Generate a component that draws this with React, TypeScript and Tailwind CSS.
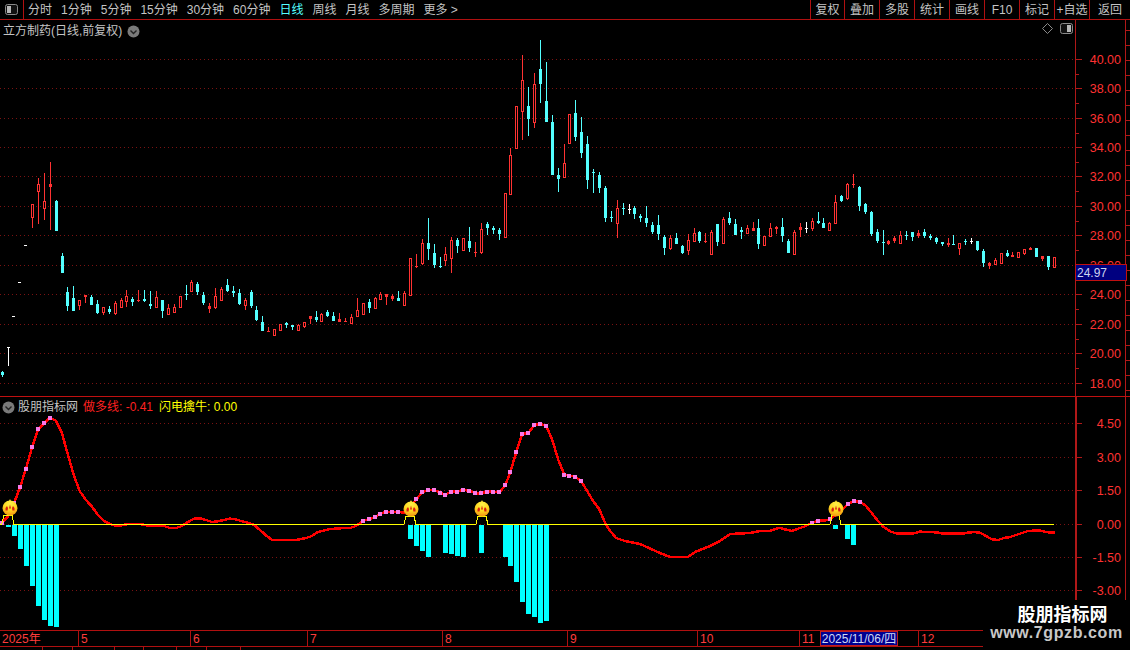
import React from 'react';

type Candle = [number, number, number, number, number, string];

const RED = '#ff3232';
const CYAN = '#54ffff';

// candles were read off zoomed crops, so each block keeps its crop origin
const blockA: Candle[] = [
  [7,662,680,666,676,'c'],[25,592,648,592,593,'w'],[41,499,499,499,500,'w'],[59,397,397,397,398,'w'],[77,286,286,286,287,'w'],
  [97,162,234,162,200,'r'],[115,84,222,102,122,'r'],[133,69,210,153,174,'r'],[151,36,240,102,111,'r'],[169,150,243,153,243,'c'],
  [187,309,369,318,369,'c'],[202,411,483,426,468,'c'],[220,408,483,444,483,'c'],[238,450,480,450,465,'r'],[256,435,459,435,441,'r'],
  [274,435,465,441,465,'c'],[292,450,492,462,489,'c'],[310,471,495,471,486,'r'],[328,468,492,477,486,'c'],[346,453,495,459,489,'r'],
  [364,444,471,450,471,'r'],[379,420,471,438,453,'r'],[397,441,468,447,456,'c'],[415,420,456,450,453,'r'],[433,420,456,447,453,'c'],
  [451,423,477,462,468,'c'],[469,423,471,441,471,'r'],[487,450,504,450,483,'c'],[505,462,492,474,492,'r'],[523,462,489,471,486,'r'],
  [541,438,471,438,471,'r'],[559,405,450,432,435,'c'],[574,390,423,396,423,'r'],[592,396,435,402,426,'c'],[610,426,465,435,459,'c'],
  [628,459,489,468,477,'r'],[646,414,477,438,471,'r'],[664,411,450,417,450,'r'],[682,387,426,405,423,'c'],[700,408,441,423,429,'c'],
  [718,417,465,429,462,'c'],[736,444,480,450,465,'r'],[754,420,474,426,468,'c'],[769,468,513,480,510,'c'],
];

const blockB: Candle[] = [
  [7,408,453,426,453,'c'],[25,441,456,453,456,'r'],[43,447,465,447,465,'r'],[61,432,450,432,450,'r'],[79,426,444,429,435,'c'],
  [97,435,450,435,441,'c'],[115,432,450,435,450,'r'],[133,426,444,426,438,'r'],[151,408,432,408,417,'r'],[169,393,426,411,420,'c'],
  [184,399,426,402,423,'r'],[202,390,411,396,408,'c'],[220,396,423,408,423,'c'],[238,399,426,417,426,'r'],[256,414,426,423,426,'r'],
  [274,402,429,411,429,'r'],[292,354,411,390,408,'r'],[310,369,402,369,402,'r'],[328,357,399,366,384,'c'],[346,351,387,354,384,'r'],
  [361,336,360,342,357,'r'],[379,342,375,342,351,'r'],[397,342,363,348,357,'r'],[415,333,363,354,363,'c'],[433,333,375,339,375,'r'],
  [451,234,345,234,345,'r'],[469,222,264,258,261,'r'],[487,177,255,189,249,'r'],[505,114,240,189,207,'c'],[523,192,264,219,255,'c'],
  [541,231,264,258,261,'c'],[556,201,258,222,240,'r'],[574,171,279,180,234,'r'],[592,174,219,180,198,'c'],[610,174,210,174,210,'r'],
  [628,141,216,183,204,'c'],[646,186,231,216,217,'r'],[664,129,222,147,216,'r'],[682,126,165,132,144,'c'],[700,138,162,144,150,'c'],
  [718,144,180,150,162,'c'],
];

const blockC: Candle[] = [
  [46,489,624,489,621,'r'],[61,354,492,375,492,'r'],[79,228,354,228,354,'r'],[97,75,330,150,243,'r'],[115,171,318,228,267,'c'],
  [133,129,294,162,276,'r'],[151,30,219,117,162,'c'],[169,96,276,213,276,'c'],[187,255,435,276,435,'c'],[205,414,486,435,447,'c'],
  [223,342,441,399,441,'r'],[238,252,342,252,339,'r'],[256,210,333,249,321,'c'],[274,261,384,306,369,'c'],[292,318,477,342,450,'c'],
  [310,417,489,426,429,'c'],[328,426,489,435,474,'c'],[346,468,576,474,564,'c'],[364,543,576,561,564,'c'],[382,510,624,534,579,'r'],
  [400,519,555,534,537,'c'],[418,522,552,537,540,'w'],[433,528,567,534,552,'c'],[451,552,576,558,564,'c'],[469,528,591,564,579,'c'],
  [487,576,612,585,606,'c'],[505,555,630,585,612,'c'],[523,615,675,621,654,'c'],[541,615,660,624,654,'r'],[559,609,642,624,642,'c'],
  [577,645,672,648,669,'c'],[595,612,675,630,660,'r'],[613,594,633,609,633,'r'],[628,603,639,606,633,'c'],[646,609,639,633,636,'r'],
  [664,600,675,606,672,'r'],[682,582,648,582,636,'c'],[700,561,639,567,639,'r'],[718,546,585,564,579,'c'],[736,567,615,582,615,'c'],
  [754,591,627,600,606,'c'],[772,585,609,594,609,'r'],
];

const blockD: Candle[] = [
  [10,186,213,204,213,'r'],[25,177,267,204,252,'c'],[43,228,258,228,255,'r'],[61,189,228,204,228,'r'],[79,198,222,201,207,'r'],
  [97,174,246,201,228,'c'],[115,237,279,243,279,'c'],[133,210,282,216,282,'r'],[151,189,231,201,210,'r'],[169,186,219,204,205,'w'],
  [187,174,213,183,204,'r'],[205,156,192,183,189,'c'],[220,174,204,189,204,'c'],[238,186,210,189,210,'r'],[256,105,192,126,189,'r'],
  [274,105,126,108,123,'c'],[292,69,120,72,114,'r'],[310,42,84,72,75,'r'],[328,78,153,81,138,'c'],[346,129,162,132,156,'c'],
  [364,153,228,156,222,'c'],[382,207,249,216,243,'c'],[400,210,285,246,247,'c'],[415,240,255,243,252,'r'],[433,228,249,234,243,'r'],
  [451,213,249,225,249,'r'],[469,213,240,225,226,'c'],[487,216,243,216,231,'c'],[505,210,234,219,228,'r'],[523,207,234,216,228,'c'],
  [541,222,240,228,234,'c'],[559,231,252,234,246,'c'],[577,246,258,246,252,'c'],[595,234,261,249,255,'r'],[610,225,255,252,253,'c'],
  [628,249,285,249,264,'r'],[646,237,255,243,244,'c'],[664,234,252,243,244,'w'],[682,243,273,243,270,'c'],[700,267,321,273,309,'c'],
  [718,306,327,309,318,'r'],[736,294,315,300,312,'r'],[754,279,309,279,309,'r'],[772,270,291,279,288,'c'],[787,276,291,285,291,'r'],
  [805,276,291,276,291,'r'],[823,267,285,267,279,'r'],[841,261,270,264,270,'r'],[859,264,291,264,291,'c'],[877,288,303,288,297,'r'],
  [895,288,330,288,321,'c'],[913,291,321,291,321,'r'],
];

const place = (list: Candle[], ox: number, oy: number): Candle[] =>
  list.map(([x, hi, lo, top, bot, c]) => [
    Math.floor(ox + x / 3) + 0.5,
    Math.round(oy + hi / 3),
    Math.round(oy + lo / 3),
    Math.round(oy + top / 3),
    Math.round(oy + bot / 3),
    c,
  ]);

const candles = [
  ...place(blockA, 0, 150),
  ...place(blockB, 260, 180),
  ...place(blockC, 490, 30),
  ...place(blockD, 750, 160),
];

const z = (pts: number[][], ox: number, oy: number) => pts.map(([x, y]) => [ox + x / 3, oy + y / 3]);

const lineA = z([[6,398],[24,380],[42,340],[60,292],[78,236],[96,172],[114,118],[132,100],[150,83],[168,92],[186,130],[204,195],[222,258],[240,305],[258,330],[276,350],[294,375],[312,393],[330,402],[348,408],[366,406],[384,402],[402,402],[420,402],[438,406],[456,406],[474,406],[492,408],[510,414],[528,414],[546,408],[564,396],[582,386],[600,385],[618,390],[636,396],[654,394],[672,390],[690,386],[708,388],[726,394],[744,398],[762,405],[780,420],[798,436],[816,450],[834,450],[852,450],[870,450],[888,450],[900,448]], 0, 390);
const lineB = [[306,538],[312,536],[318,532],[330,529],[345,528]];
const lineC = z([[0,354],[18,348],[40,332],[58,328],[76,320],[91,311],[109,306],[127,306],[145,306],[163,308],[181,290],[199,268],[217,246],[235,240],[253,240],[271,248],[286,254],[304,245],[322,245],[340,240],[358,242],[376,250],[394,250],[412,245],[430,245],[448,247],[466,226],[481,186],[499,126],[517,72],[535,69],[553,46],[571,41],[589,49],[607,90],[625,150],[643,194],[658,197],[676,200],[694,214],[712,244],[730,274],[748,298],[766,340],[780,362]], 350, 410);
const lineD = [[616,538],[625,541],[640,544],[660,553],[670,557],[688,557],[695,552],[710,546],[720,541],[730,534],[750,533],[760,531],[770,531],[778,528]];
const lineE = z([[0,114],[18,119],[36,123],[54,116],[72,110],[96,98],[114,92],[132,92],[150,88],[168,74],[186,60],[204,42],[222,33],[240,36],[258,48],[276,70],[294,93],[312,112],[330,124],[348,130],[366,131],[384,131],[402,130],[420,125],[438,126],[456,126],[474,128],[492,131],[510,131],[528,131],[546,131],[564,128],[582,126],[600,128],[618,138],[636,148],[654,150],[672,144],[690,141],[708,135],[726,129],[744,123],[762,122],[780,122],[798,126],[816,128],[825,128]], 780, 490);

const redLine = [...lineA, ...lineB, ...lineC, ...lineD, ...lineE].map(p => p.join(',')).join(' ');

const squares = [
  lineA[0], ...lineA.slice(2, 9),
  ...lineC.slice(2, 9),
  ...lineC.slice(11, 34),
  ...lineC.slice(36, 40),
  lineE[5], lineE[6], lineE[8], lineE[11], lineE[12], lineE[13],
];

const bars = [
  [6,527],[12,536],[18,549],[24,566],[30,586],[36,606],[42,620],[48,626],[54,627],
  [408,539],[414,546],[420,551],[426,557],[443,553],[449,554],[455,556],[461,557],[479,553],
  [503,557],[508,566],[514,582],[520,602],[526,614],[532,617],[538,623],[544,621],
  [833,529],[845,539],[851,545],
];

const yellowLine = '0,524.5 1.7,524.5 4,515 12,515 14,524.5 404,524.5 406,516.5 414,516.5 416,524.5 476,524.5 478,516.5 486,516.5 488,524.5 830,524.5 832,515 839,515 841,524.5 1054,524.5';

const upperTicks = [59, 88, 118, 147, 176, 206, 235, 265, 294, 324, 353, 383];
const upperLabels = ['40.00','38.00','36.00','34.00','32.00','30.00','28.00','26.00','24.00','22.00','20.00','18.00'];
const lowerTicks = [423, 457, 490, 524, 557, 590];
const lowerLabels = ['4.50','3.00','1.50','0.00','-1.50','-3.00'];

const tabs = ['分时','1分钟','5分钟','15分钟','30分钟','60分钟','日线','周线','月线','多周期','更多 >'];
const actions = [
  { label: '复权', w: 'w-[34px]' },
  { label: '叠加', w: 'w-[35px]' },
  { label: '多股', w: 'w-[35px]' },
  { label: '统计', w: 'w-[35px]' },
  { label: '画线', w: 'w-[35px]' },
  { label: 'F10', w: 'w-[35px]' },
  { label: '标记', w: 'w-[35px]' },
  { label: '+自选', w: 'w-[35px]' },
  { label: '返回', w: 'w-[41px]' },
];

const months = [
  { label: '2025年', w: 'w-[78px]' },
  { label: '5', w: 'w-[112px]' },
  { label: '6', w: 'w-[117px]' },
  { label: '7', w: 'w-[135px]' },
  { label: '8', w: 'w-[125px]' },
  { label: '9', w: 'w-[130px]' },
  { label: '10', w: 'w-[102px]' },
  { label: '11', w: 'w-[21px]' },
];

const Chevron = () => (
  <svg width="13" height="13" viewBox="0 0 13 13" className="shrink-0">
    <circle cx="6.5" cy="6.5" r="6" fill="#7a7a7a" />
    <path d="M3.5 5.5 L6.5 8.5 L9.5 5.5" fill="none" stroke="#222" strokeWidth="1.4" />
  </svg>
);

const PanelToggle = ({ side }: { side: 'left' | 'right' }) => (
  <svg width="13" height="11" viewBox="0 0 13 11">
    <rect x="0.5" y="0.5" width="12" height="10" rx="2" fill="#111" stroke="#8a8a8a" />
    <rect x={side === 'left' ? 2 : 7} y="2" width="4" height="7" fill="#b8b8b8" />
  </svg>
);

const Badge = ({ cx, cy }: { cx: number; cy: number }) => (
  <g transform={`translate(${cx} ${cy})`}>
    <path d="M0 -9 L1.5 -6 L-1.5 -6 Z" fill="#ffe030" />
    <circle r="7.5" fill="url(#badge)" />
    <path d="M-4.5 2.5 L-4.5 0 L-3 -2 L-2 0 L-2.4 2.5 Z" fill="#d81e10" />
    <path d="M4.5 2.5 L4.5 0 L3 -2 L2 0 L2.4 2.5 Z" fill="#d81e10" />
    <path d="M-1 0.5 L0 -3.5 L1 0.5 Z" fill="#d81e10" />
  </g>
);

const AxisLabels = ({ ticks, labels }: { ticks: number[]; labels: string[] }) => (
  <>
    {ticks.map((y, i) => (
      <g key={y}>
        <rect x={0} y={y} width={7} height={1} fill="#b01818" />
        <text x={46} y={y + 5} textAnchor="end" fontSize="12.5" fill={RED} fontFamily="Liberation Sans, sans-serif">
          {labels[i]}
        </text>
      </g>
    ))}
  </>
);

export default function App() {
  const halfTicks = upperTicks.slice(0, -1).map((y, i) => Math.round((y + upperTicks[i + 1]) / 2));
  const rightTicks = Array.from({ length: 25 }, (_, i) => 30 + i * 15);

  return (
    <div className="relative flex h-[650px] w-[1130px] flex-col overflow-hidden bg-black font-['Liberation_Sans','Noto_Sans_CJK_SC',sans-serif] text-[12px] text-[#c4c4c4]">
      {/* toolbar */}
      <div className="flex h-[20px] shrink-0 items-center border-b border-[#b01010]">
        <div className="flex h-full w-[24px] shrink-0 items-center justify-center border-r border-[#b01010]">
          <PanelToggle side="left" />
        </div>
        <div className="ml-[4px] flex flex-1 items-center gap-[9px]">
          {tabs.map(t => (
            <span key={t} className={t === '日线' ? 'text-[#54ffff]' : ''}>{t}</span>
          ))}
        </div>
        <div className="flex h-full shrink-0">
          {actions.map(a => (
            <div key={a.label} className={`${a.w} flex items-center justify-center border-l border-[#b01010] whitespace-nowrap`}>
              {a.label}
            </div>
          ))}
        </div>
      </div>

      {/* price pane */}
      <div className="relative flex h-[377px] shrink-0 border-b border-[#c01010]">
        <svg width="1075" height="376" viewBox="0 20 1075 376" className="shrink-0" shapeRendering="crispEdges">
          {upperTicks.map(y => (
            <line key={y} x1="0" x2="1075" y1={y + 0.5} y2={y + 0.5} stroke="#7a1212" strokeDasharray="1 3" />
          ))}
          {candles.map(([x, hi, lo, top, bot, c], i) => {
            const color = c === 'c' ? CYAN : c === 'r' ? RED : '#ffffff';
            const h = (bot as number) - (top as number);
            return (
              <g key={i}>
                <line x1={x} x2={x} y1={hi} y2={lo} stroke={color} />
                {c === 'r' && h > 3 ? (
                  <rect x={(x as number) - 1} y={(top as number) + 0.5} width={2} height={h} fill="#000" stroke={color} />
                ) : (
                  <rect x={(x as number) - 1.5} y={top} width={3} height={Math.max(h, 1)} fill={color} />
                )}
              </g>
            );
          })}
        </svg>
        <svg width="55" height="376" viewBox="0 20 55 376" className="shrink-0">
          <rect x="0" y="20" width="1" height="376" fill="#b01818" />
          <rect x="50" y="20" width="1" height="376" fill="#b01818" />
          {halfTicks.map(y => (
            <rect key={y} x={0} y={y} width={4} height={1} fill="#b01818" />
          ))}
          {rightTicks.map(y => (
            <rect key={y} x={51} y={y} width={4} height={1} fill="#b01818" />
          ))}
          <AxisLabels ticks={upperTicks} labels={upperLabels} />
        </svg>

        <div className="absolute left-[3px] top-[2px] flex items-center gap-[5px]">
          <span>立方制药(日线,前复权)</span>
          <Chevron />
        </div>
        <div className="absolute left-[1042px] top-[3px] flex items-center gap-[7px]">
          <svg width="11" height="11" viewBox="0 0 11 11">
            <path d="M5.5 0.5 L10.5 5.5 L5.5 10.5 L0.5 5.5 Z" fill="none" stroke="#8a8a8a" />
          </svg>
          <PanelToggle side="right" />
        </div>
        <div className="absolute left-[1075px] top-[244px] flex h-[17px] w-[52px] items-center border border-[#c01010] bg-[#000080] pl-[1px] text-[#ccd4f0]">
          24.97
        </div>
      </div>

      {/* indicator pane */}
      <div className="relative flex h-[233px] shrink-0">
        <svg width="1075" height="233" viewBox="0 397 1075 233" className="shrink-0">
          <defs>
            <radialGradient id="badge" cx="50%" cy="20%" r="85%">
              <stop offset="0%" stopColor="#fff24a" />
              <stop offset="50%" stopColor="#ffd820" />
              <stop offset="100%" stopColor="#f08a10" />
            </radialGradient>
          </defs>
          <g shapeRendering="crispEdges">
            {lowerTicks.map(y => (
              <line key={y} x1="0" x2="1075" y1={y + 0.5} y2={y + 0.5} stroke="#7a1212" strokeDasharray="1 3" />
            ))}
            {bars.map(([x, b]) => (
              <rect key={x} x={x} y={525} width={5} height={b - 525} fill="#00ffff" />
            ))}
            <polyline points={redLine} fill="none" stroke="#ff0000" strokeWidth="2.5" strokeLinejoin="round" />
            {squares.map(([x, y], i) => (
              <rect key={i} x={Math.round(x - 2)} y={Math.round(y - 2)} width={4} height={4} fill="#f878e8" />
            ))}
            <polyline points={yellowLine} fill="none" stroke="#ffff00" />
          </g>
          <Badge cx={10} cy={508} />
          <Badge cx={411} cy={509} />
          <Badge cx={482} cy={509} />
          <Badge cx={836} cy={509} />
        </svg>
        <svg width="55" height="233" viewBox="0 397 55 233" className="shrink-0">
          <rect x="0" y="397" width="2" height="233" fill="#b01818" />
          <rect x="50" y="397" width="1" height="233" fill="#b01818" />
          <AxisLabels ticks={lowerTicks} labels={lowerLabels} />
        </svg>

        <div className="absolute left-[2px] top-[1px] flex items-center gap-[3px]">
          <Chevron />
          <span>股朋指标网</span>
          <span className="ml-[2px] text-[#ff2020]">做多线: -0.41</span>
          <span className="ml-[3px] text-[#ffff00]">闪电擒牛: 0.00</span>
        </div>
      </div>

      {/* date axis */}
      <div className="flex h-[17px] shrink-0 border-y border-[#b01010] text-[#ff3c3c]">
        {months.map((m, i) => (
          <div key={m.label} className={`${m.w} flex shrink-0 items-center pl-[2px] ${i > 0 ? 'border-l border-[#b01010]' : ''}`}>
            {m.label}
          </div>
        ))}
        <div className="flex w-[78px] shrink-0 items-center justify-center border border-[#c02020] bg-[#000090] text-[#d0d8f4]">
          2025/11/06/四
        </div>
        <div className="w-[20px] shrink-0" />
        <div className="flex flex-1 items-center border-l border-[#b01010] pl-[2px]">12</div>
      </div>
      <div className="flex flex-1">
        {[43, 30, 42, 29, 33, 30, 34].map((w, i) => (
          <div key={i} className="border-r border-[#b01010]" style={{ width: w }} />
        ))}
      </div>

      {/* site stamp */}
      <div className="absolute left-[983px] top-[600px] flex h-[50px] w-[147px] flex-col items-center bg-black pt-[4px]">
        <span className="ml-[12px] text-[18px] leading-[22px] font-bold text-white">股朋指标网</span>
        <span className="mt-[-3px] text-[16px] leading-[20px] font-bold tracking-[0.6px] text-[#c8c8c8]">www.7gpzb.com</span>
      </div>
    </div>
  );
}
